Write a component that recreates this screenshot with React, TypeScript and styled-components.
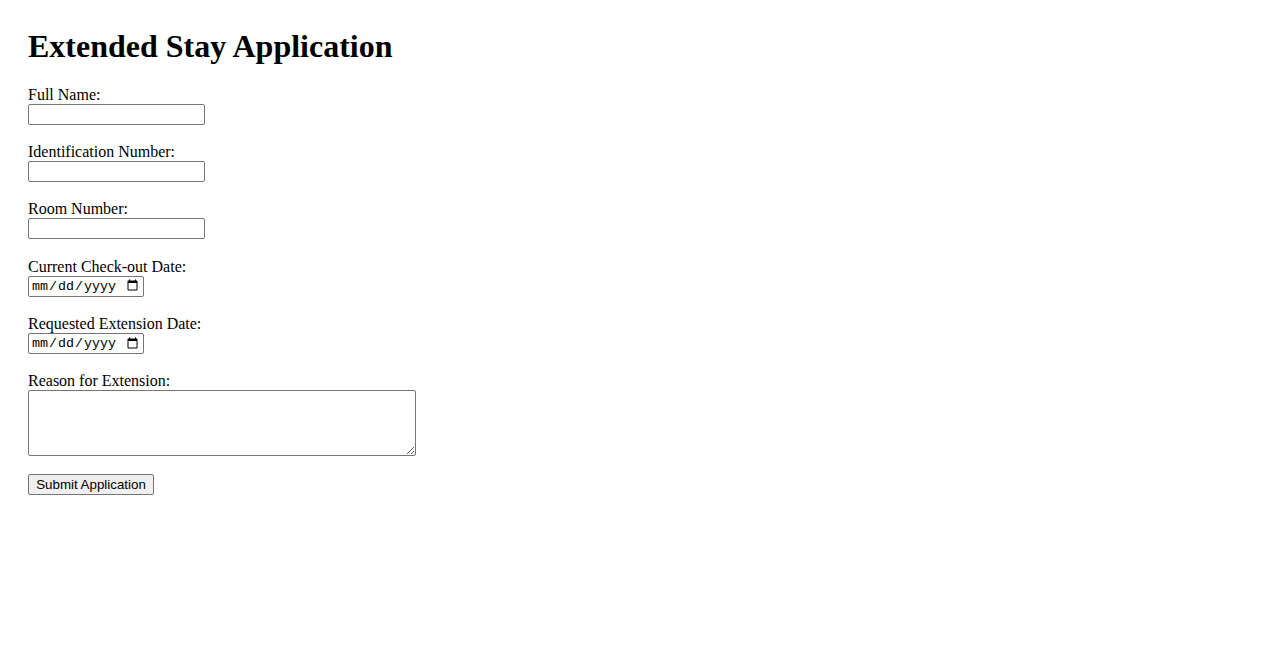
import React from "react";
import styled, { createGlobalStyle } from "styled-components";

const Global = createGlobalStyle`
  body {
    margin: 8px;
    font-family: "Liberation Serif", "Times New Roman", serif;
    font-size: 16px;
    color: #000;
    background: #fff;
  }
`;

const Page = styled.div`
  padding: 0 20px 20px;
`;

const Title = styled.h1`
  font-size: 32px;
  font-weight: bold;
  margin: 20px 0 21px;
`;

const Form = styled.form`
  display: block;
`;

const Group = styled.div`
  margin-bottom: 18.2px;
`;

const Label = styled.label`
  display: block;
`;

const TextInput = styled.input<{ $w: number; $mono?: boolean }>`
  box-sizing: border-box;
  width: ${(p) => p.$w}px;
  height: 21px;
  font-family: ${(p) =>
    p.$mono ? `"Liberation Mono", "Courier New", monospace` : `"Liberation Sans", Arial, sans-serif`};
  font-size: 13.33px;
  border: 1px solid #767676;
  border-radius: 2px;
  padding: 1px 2px;
  margin: 0;
`;

const TextArea = styled.textarea`
  box-sizing: border-box;
  width: 388px;
  height: 66px;
  border: 1px solid #767676;
  border-radius: 2px;
  padding: 2px;
  margin: 0;
  vertical-align: bottom;
  font-family: "Liberation Mono", monospace;
  font-size: 13.33px;
`;

const Submit = styled.button`
  box-sizing: border-box;
  height: 21px;
  width: 126px;
  padding: 1px 6px;
  font-family: "Liberation Sans", Arial, sans-serif;
  font-size: 13.33px;
  background: #efefef;
  border: 1px solid #767676;
  border-radius: 2px;
  color: #000;
  margin: 0;
`;

export default function App() {
  return (
    <>
      <Global />
      <Page>
        <Title>Extended Stay Application</Title>
        <Form onSubmit={(e) => e.preventDefault()}>
          <Group>
            <Label htmlFor="name">Full Name:</Label>
            <TextInput id="name" type="text" $w={177} />
          </Group>
          <Group>
            <Label htmlFor="idnum">Identification Number:</Label>
            <TextInput id="idnum" type="text" $w={177} />
          </Group>
          <Group>
            <Label htmlFor="room">Room Number:</Label>
            <TextInput id="room" type="text" $w={177} />
          </Group>
          <Group>
            <Label htmlFor="checkout">Current Check-out Date:</Label>
            <TextInput id="checkout" type="date" $w={116} $mono />
          </Group>
          <Group>
            <Label htmlFor="ext">Requested Extension Date:</Label>
            <TextInput id="ext" type="date" $w={116} $mono />
          </Group>
          <Group>
            <Label htmlFor="reason">Reason for Extension:</Label>
            <TextArea id="reason" rows={4} />
          </Group>
          <Submit type="submit">Submit Application</Submit>
        </Form>
      </Page>
    </>
  );
}
